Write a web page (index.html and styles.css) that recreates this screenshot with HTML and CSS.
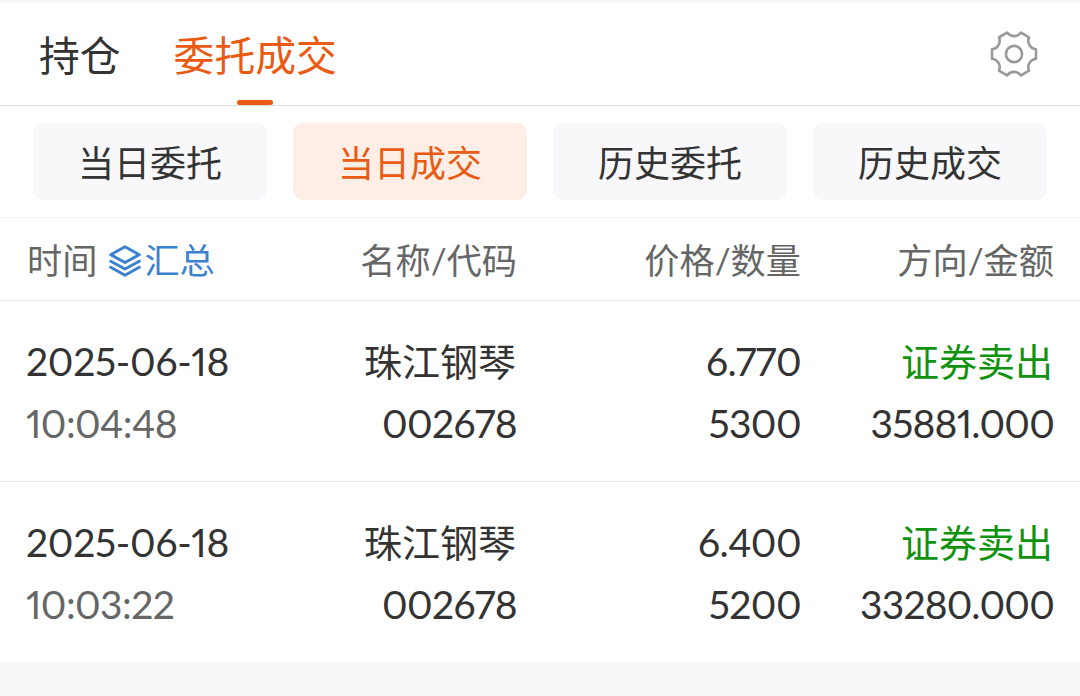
FILE: index.html
```html
<!DOCTYPE html>
<html lang="zh-CN">
<head>
  <meta charset="UTF-8" />
  <meta name="viewport" content="width=device-width, initial-scale=1.0" />
  <title>委托成交</title>
  <link rel="stylesheet" href="styles.css">
</head>
<body>
  <header class="tabs">
    <div class="tab">持仓</div>
    <div class="tab active">委托成交</div>
    <svg class="gear" viewBox="-24 -24 48 48" width="48" height="48">
      <path d="M22 -4.7 V4.7 A8.6 8.6 0 0 0 15.07 16.7 L6.93 21.4 A8.6 8.6 0 0 0 -6.93 21.4 L-15.07 16.7 A8.6 8.6 0 0 0 -22 4.7 V-4.7 A8.6 8.6 0 0 0 -15.07 -16.7 L-6.93 -21.4 A8.6 8.6 0 0 0 6.93 -21.4 L15.07 -16.7 A8.6 8.6 0 0 0 22 -4.7 Z" />
      <circle r="8.1" />
    </svg>
  </header>

  <nav class="filters">
    <div class="filter">当日委托</div>
    <div class="filter active">当日成交</div>
    <div class="filter">历史委托</div>
    <div class="filter">历史成交</div>
  </nav>

  <div class="row head">
    <div class="time">时间
      <span class="summary">
        <svg class="layers" viewBox="0 0 32 32" width="32" height="32">
          <path d="M16 1.8 L30.3 9.7 L16 17.5 L1.7 9.7 Z" />
          <path d="M1.7 16.2 L16 24 L30.3 16.2" />
          <path d="M1.7 22.3 L16 30.2 L30.3 22.3" />
        </svg>汇总</span>
    </div>
    <div>名称/代码</div>
    <div>价格/数量</div>
    <div>方向/金额</div>
  </div>

  <div class="row deal">
    <div class="date">2025-06-18</div>
    <div class="name">珠江钢琴</div>
    <div>6.770</div>
    <div class="name sell">证券卖出</div>
    <div class="clock">10:04:48</div>
    <div>002678</div>
    <div>5300</div>
    <div class="amount">35881.000</div>
  </div>

  <div class="row deal">
    <div class="date">2025-06-18</div>
    <div class="name">珠江钢琴</div>
    <div>6.400</div>
    <div class="name sell">证券卖出</div>
    <div class="clock">10:03:22</div>
    <div>002678</div>
    <div>5200</div>
    <div class="amount">33280.000</div>
  </div>
</body>
</html>
```
FILE: styles.css
```css
* {
  box-sizing: border-box;
}
body {
  margin: 0;
  min-height: 696px;
  background: #f7f8fa;
  color: #333;
  font-family: Lato, "Noto Sans CJK SC", sans-serif;
  border-top: 3px solid #f7f7f7;
}
.tabs {
  display: flex;
  align-items: center;
  height: 103px;
  padding: 0 42.5px 0 39px;
  background: #fff;
  border-bottom: 1px solid #ddd;
}
.tab {
  position: relative;
  height: 102px;
  margin-right: 53px;
  font-size: 40.8px;
  line-height: 105px;
}
.tab.active {
  color: #ea5a12;
}
.tab.active::after {
  content: "";
  position: absolute;
  left: 50%;
  bottom: 0;
  width: 36px;
  height: 5px;
  margin-left: -18px;
  border-radius: 3px;
  background: #ea5a12;
}
.gear {
  margin-left: auto;
  fill: none;
  stroke: #999;
  stroke-width: 2.6;
  stroke-linejoin: round;
}
.filters {
  display: grid;
  grid-template-columns: repeat(4, 1fr);
  gap: 26px;
  height: 112px;
  padding: 17px 33px;
  background: #fff;
  border-bottom: 1px solid #f5f5f5;
}
.filter {
  height: 77px;
  border-radius: 10px;
  background: #f8f8fa;
  font-size: 36px;
  line-height: 81px;
  text-align: center;
}
.filter.active {
  background: #ffeee6;
  color: #ea5a12;
}
.row {
  display: grid;
  grid-template-columns: 207px 284px 284px 253px;
  padding: 0 26px;
  background: #fff;
  text-align: right;
  white-space: nowrap;
}
.head {
  height: 83px;
  border-bottom: 1px solid #eaeaea;
  color: #666;
  font-size: 35.2px;
  line-height: 84px;
}
.time {
  display: flex;
  gap: 12px;
  padding-left: 1px;
}
.summary {
  display: flex;
  align-items: center;
  gap: 3px;
  color: #3b81d1;
}
.layers {
  margin-top: 2px;
  fill: none;
  stroke: #3b81d1;
  stroke-width: 3;
  stroke-linejoin: round;
  stroke-linecap: round;
}
.deal {
  grid-template-rows: 62px 62px;
  height: 181px;
  padding-top: 29px;
  border-bottom: 1px solid #eaeaea;
  font-size: 39px;
  font-variant-numeric: proportional-nums;
  letter-spacing: -0.6px;
  line-height: 62px;
}
.deal:last-child {
  height: 180px;
  border-bottom: none;
}
.date, .clock {
  text-align: left;
}
.date {
  letter-spacing: -0.3px;
}
.clock {
  color: #666;
}
.amount {
  letter-spacing: -0.8px;
}
.name {
  padding-right: 1px;
  font-size: 38px;
  letter-spacing: 0;
}
.sell {
  color: #0f930f;
}
```
